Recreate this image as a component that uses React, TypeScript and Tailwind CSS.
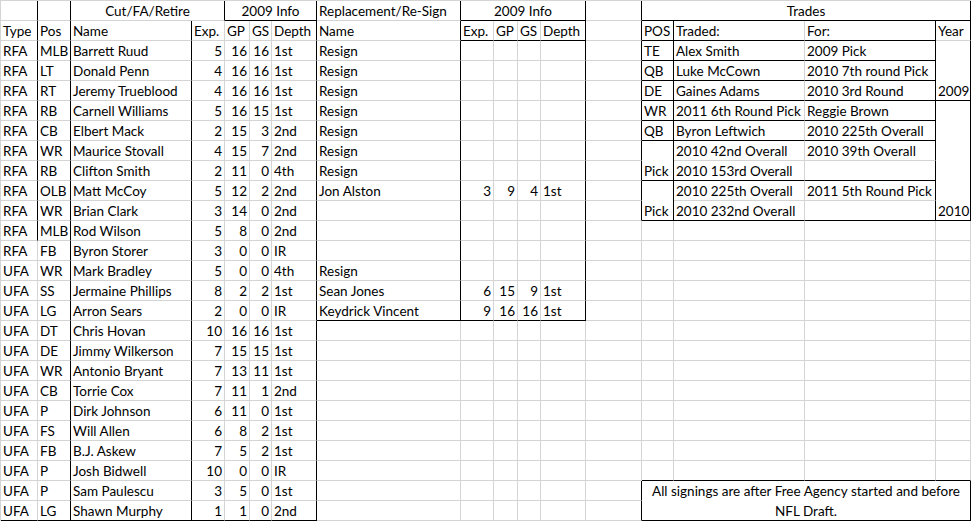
import clsx from 'clsx';

type Cell = { t?: string; a?: 'l' | 'r' | 'c'; rs?: number; cs?: number; v?: 'b' | 'c'; lines?: string[] };

const ROWS = 26;
const COLS = 17;

// Cut/FA/Retire block: type, pos, name, exp, gp, gs, depth
const cuts = [
  'RFA|MLB|Barrett Ruud|5|16|16|1st',
  'RFA|LT|Donald Penn|4|16|16|1st',
  'RFA|RT|Jeremy Trueblood|4|16|16|1st',
  'RFA|RB|Carnell Williams|5|16|15|1st',
  'RFA|CB|Elbert Mack|2|15|3|2nd',
  'RFA|WR|Maurice Stovall|4|15|7|2nd',
  'RFA|RB|Clifton Smith|2|11|0|4th',
  'RFA|OLB|Matt McCoy|5|12|2|2nd',
  'RFA|WR|Brian Clark|3|14|0|2nd',
  'RFA|MLB|Rod Wilson|5|8|0|2nd',
  'RFA|FB|Byron Storer|3|0|0|IR',
  'UFA|WR|Mark Bradley|5|0|0|4th',
  'UFA|SS|Jermaine Phillips|8|2|2|1st',
  'UFA|LG|Arron Sears|2|0|0|IR',
  'UFA|DT|Chris Hovan|10|16|16|1st',
  'UFA|DE|Jimmy Wilkerson|7|15|15|1st',
  'UFA|WR|Antonio Bryant|7|13|11|1st',
  'UFA|CB|Torrie Cox|7|11|1|2nd',
  'UFA|P|Dirk Johnson|6|11|0|1st',
  'UFA|FS|Will Allen|6|8|2|1st',
  'UFA|FB|B.J. Askew|7|5|2|1st',
  'UFA|P|Josh Bidwell|10|0|0|IR',
  'UFA|P|Sam Paulescu|3|5|0|1st',
  'UFA|LG|Shawn Murphy|1|1|0|2nd',
];

// Replacement block, keyed by row index
const replacements: Record<number, string> = {
  2: 'Resign',
  3: 'Resign',
  4: 'Resign',
  5: 'Resign',
  6: 'Resign',
  7: 'Resign',
  8: 'Resign',
  9: 'Jon Alston|3|9|4|1st',
  13: 'Resign',
  14: 'Sean Jones|6|15|9|1st',
  15: 'Keydrick Vincent|9|16|16|1st',
};

const trades: [number, number, string][] = [
  [1, 13, 'POS'], [1, 14, 'Traded:'], [1, 15, 'For:'], [1, 16, 'Year'],
  [2, 13, 'TE'], [2, 14, 'Alex Smith'], [2, 15, '2009 Pick'],
  [3, 13, 'QB'], [3, 14, 'Luke McCown'], [3, 15, '2010 7th round Pick'],
  [4, 13, 'DE'], [4, 14, 'Gaines Adams'], [4, 15, '2010 3rd Round'],
  [5, 13, 'WR'], [5, 14, '2011 6th Round Pick'], [5, 15, 'Reggie Brown'],
  [6, 13, 'QB'], [6, 14, 'Byron Leftwich'], [6, 15, '2010 225th Overall'],
  [7, 14, '2010 42nd Overall'], [7, 15, '2010 39th Overall'],
  [8, 14, '2010 153rd Overall'],
  [9, 14, '2010 225th Overall'], [9, 15, '2011 5th Round Pick'],
  [10, 14, '2010 232nd Overall'],
];

const COLSPAN: Record<number, string> = { 2: 'col-span-2', 3: 'col-span-3', 4: 'col-span-4' };
const ROWSPAN: Record<number, string> = { 2: 'row-span-2', 3: 'row-span-3', 6: 'row-span-6' };

// black border on the right edge of column c, row r
const vb = (r: number, c: number) => {
  if (c === 0) return r <= 11;
  if (c === 1 || c === 6) return true;
  if (c === 2) return r >= 1;
  if (c === 3) return r === 0;
  if (c === 7 || c === 11) return r <= 15;
  if (c === 12 || c === 16) return r <= 10 || r >= 24;
  if (c === 13 || c === 15) return r >= 1 && r <= 10;
  return false;
};

// black border on the bottom edge of row r, column c
const hb = (r: number, c: number) => {
  if (r === 0) return (c >= 4 && c <= 6) || (c >= 8 && c <= 11) || c >= 13;
  if (r === 1) return (c >= 8 && c <= 11) || (c >= 13 && c <= 15);
  if (r === 15 && c >= 7 && c <= 11) return true;
  if (r === 25) return c <= 6 || c >= 13;
  if (r === 23) return c >= 13;
  if (c >= 13 && c <= 15 && [2, 3, 4, 5, 6, 8, 10].includes(r)) return true;
  if (c === 16 && (r === 4 || r === 10)) return true;
  return false;
};

function buildGrid() {
  const grid: (Cell | null)[][] = Array.from({ length: ROWS }, () =>
    Array.from({ length: COLS }, () => ({} as Cell))
  );
  const put = (r: number, c: number, cell: Cell) => {
    const rs = cell.rs ?? 1;
    const cs = cell.cs ?? 1;
    for (let i = r; i < r + rs; i++) for (let j = c; j < c + cs; j++) grid[i][j] = null;
    grid[r][c] = cell;
  };

  // headers
  put(0, 2, { t: 'Cut/FA/Retire', cs: 2, a: 'c' });
  put(0, 4, { t: '2009 Info', cs: 3, a: 'c' });
  put(0, 7, { t: 'Replacement/Re-Sign' });
  put(0, 8, { t: '2009 Info', cs: 4, a: 'c' });
  put(0, 13, { t: 'Trades', cs: 4, a: 'c' });
  ['Type', 'Pos', 'Name', 'Exp.', 'GP', 'GS', 'Depth', 'Name', 'Exp.', 'GP', 'GS', 'Depth'].forEach((h, i) =>
    put(1, i, { t: h })
  );

  cuts.forEach((line, i) => {
    const f = line.split('|');
    f.forEach((t, j) => put(i + 2, j, { t, a: j >= 3 && j <= 5 ? 'r' : 'l' }));
  });

  Object.entries(replacements).forEach(([k, line]) => {
    const f = line.split('|');
    f.forEach((t, j) => put(Number(k), 7 + j, { t, a: j >= 1 && j <= 3 ? 'r' : 'l' }));
  });

  trades.forEach(([r, c, t]) => put(r, c, { t }));
  put(2, 16, { t: '2009', rs: 3 });
  put(5, 16, { t: '2010', rs: 6 });
  put(7, 13, { t: 'Pick', rs: 2 });
  put(9, 13, { t: 'Pick', rs: 2 });
  put(24, 13, {
    lines: ['All signings are after Free Agency started and before', 'NFL Draft.'],
    rs: 2,
    cs: 4,
    a: 'c',
    v: 'c',
  });
  return grid;
}

export default function App() {
  const grid = buildGrid();
  const items: JSX.Element[] = [];

  grid.forEach((row, r) =>
    row.forEach((cell, c) => {
      if (!cell) return;
      const rs = cell.rs ?? 1;
      const cs = cell.cs ?? 1;
      const right = vb(r, c + cs - 1);
      const bottom = hb(r + rs - 1, c);
      items.push(
        <div
          key={`${r}-${c}`}
          className={clsx(
            'flex whitespace-nowrap px-[2px] leading-[17px] border-r border-b',
            right ? 'border-r-black' : 'border-r-[#d4d4d4]',
            bottom ? 'border-b-black' : 'border-b-[#d4d4d4]',
            cell.a === 'r' ? 'justify-end' : cell.a === 'c' ? 'justify-center' : 'justify-start',
            cell.v === 'c' ? 'items-center' : 'items-end',
            cs > 1 && COLSPAN[cs],
            rs > 1 && ROWSPAN[rs]
          )}
        >
          {cell.lines ? (
            <div className="pt-px text-center leading-[20px]">
              {cell.lines.map((l) => (
                <div key={l}>{l}</div>
              ))}
            </div>
          ) : (
            cell.t
          )}
        </div>
      );
    })
  );

  return (
    <div className="h-[521px] w-[971px] overflow-hidden bg-white font-['Lato','Liberation_Sans',sans-serif] text-[13.5px] text-black">
      <div className="grid w-max grid-cols-[37px_33px_121px_33px_25px_22px_45px_144px_33px_24px_23px_45px_56px_32px_131px_131px_35px] auto-rows-[20px] border-l border-t border-[#d4d4d4]">
        {items}
      </div>
    </div>
  );
}
